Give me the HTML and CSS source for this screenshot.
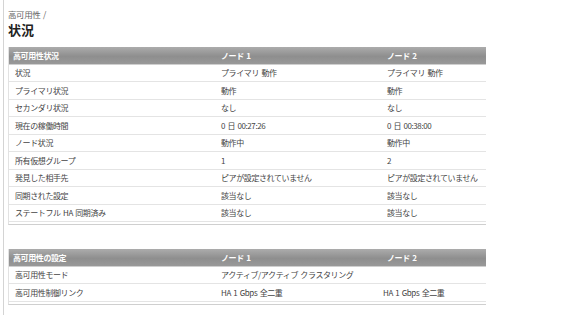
FILE: index.html
```html
<!DOCTYPE html>
<html lang="ja">
<head>
    <meta charset="UTF-8">
    <meta name="viewport" content="width=device-width, initial-scale=1.0">
    <title>状況</title>
    <link rel="stylesheet" href="styles.css">
</head>
<body>
    <div class="page">
        <div class="breadcrumb">高可用性 /</div>
        <h1>状況</h1>

        <div class="panel">
            <table class="grid">
                <tr>
                    <th class="c-label">高可用性状況</th>
                    <th class="c-node1">ノード 1</th>
                    <th class="c-node2">ノード 2</th>
                </tr>
                <tr><td>状況</td><td>プライマリ 動作</td><td>プライマリ 動作</td></tr>
                <tr><td>プライマリ状況</td><td>動作</td><td>動作</td></tr>
                <tr><td>セカンダリ状況</td><td>なし</td><td>なし</td></tr>
                <tr><td>現在の稼働時間</td><td>0 日 00:27:26</td><td>0 日 00:38:00</td></tr>
                <tr><td>ノード状況</td><td>動作中</td><td>動作中</td></tr>
                <tr><td>所有仮想グループ</td><td>1</td><td>2</td></tr>
                <tr><td>発見した相手先</td><td>ピアが設定されていません</td><td>ピアが設定されていません</td></tr>
                <tr><td>同期された設定</td><td>該当なし</td><td>該当なし</td></tr>
                <tr><td>ステートフル HA 同期済み</td><td>該当なし</td><td>該当なし</td></tr>
            </table>
        </div>

        <div class="panel second">
            <table class="grid">
                <tr>
                    <th class="c-label">高可用性の設定</th>
                    <th class="c-node1">ノード 1</th>
                    <th class="c-node2">ノード 2</th>
                </tr>
                <tr><td>高可用性モード</td><td>アクティブ/アクティブ クラスタリング</td><td></td></tr>
                <tr><td>高可用性制御リンク</td><td>HA 1 Gbps 全二重</td><td class="shift">HA 1 Gbps 全二重</td></tr>
            </table>
        </div>
    </div>
</body>
</html>
```

FILE: styles.css
```css
* {
    margin: 0;
    padding: 0;
    box-sizing: border-box;
    font-family: "Noto Sans CJK JP", "Noto Sans", sans-serif;
}
body {
    background: #fff;
    color: #444;
}
.page {
    margin-left: 3px;
    width: 483px;
    border-left: 1px solid #d4d4d4;
    padding: 9px 0 10px 4px;
}
.breadcrumb {
    font-size: 8.5px;
    line-height: 11px;
    color: #666;
    letter-spacing: -0.4px;
    word-spacing: 1px;
}
h1 {
    font-size: 13px;
    line-height: 16px;
    font-weight: bold;
    color: #222;
    margin: 2px 0 9px;
}
.panel {
    border-left: 1px solid #e2e2e2;
    border-bottom: 1px solid #cfcfcf;
    padding-bottom: 2px;
}
.panel.second {
    margin-top: 24px;
}
.grid {
    width: 477px;
    border-collapse: collapse;
    table-layout: fixed;
    font-size: 8px;
    letter-spacing: -0.4px;
    word-spacing: 1px;
}
.grid th {
    height: 17px;
    background: linear-gradient(#acacac, #8e8e8e 55%, #999);
    color: #fff;
    font-weight: bold;
    text-align: left;
    padding: 0 6px;
    border-bottom: 1px solid #cfcfcf;
}
.grid th.c-label {
    width: 206px;
    padding-left: 4px;
}
.grid th.c-node1 {
    width: 166px;
}
.grid td {
    height: 17.5px;
    padding: 0 6px;
    border-bottom: 1px solid #e4e4e4;
    white-space: nowrap;
    color: #444;
}
.grid td.shift {
    padding-left: 2px;
}
```
